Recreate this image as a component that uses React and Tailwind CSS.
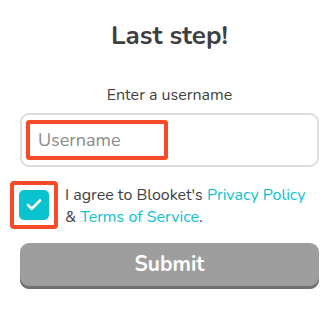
import { Check } from "lucide-react";

export default function App() {
  return (
    <div className="w-[335px] h-[314px] bg-white pl-[4px] font-['Nunito','Noto_Sans',sans-serif] text-[#3f3f3f] flex flex-col items-center">
      <h1 className="mt-[19px] text-[26px] leading-[34px] font-bold">Last step!</h1>

      <div className="mt-[31px] text-[16px] leading-[22px]">Enter a username</div>

      <div className="mt-[7px] w-[299px] h-[54px] border-2 border-[#dddddd] rounded-[9px] px-[4px] py-[3px] flex items-center">
        <input
          placeholder="Username"
          className="w-[142px] h-[40px] border-4 border-[#f54b28] rounded-[3px] px-[8px] text-[18px] outline-none placeholder:text-[#8a8a8a]"
        />
      </div>

      <div className="mt-[14px] w-[319px] flex items-start">
        <div className="shrink-0 border-4 border-[#f54b28] rounded-[4px] p-[5px]">
          <div className="w-[30px] h-[30px] rounded-[5px] bg-[#0bc2cf] flex items-center justify-center">
            <Check className="w-[18px] h-[18px] text-white" strokeWidth={3.5} />
          </div>
        </div>
        <p className="ml-[7px] mt-[3px] text-[16px] leading-[22px]">
          I agree to Blooket's <span className="text-[#0bc2cf]">Privacy Policy</span>
          <br />& <span className="text-[#0bc2cf]">Terms of Service</span>.
        </p>
      </div>

      <button className="mt-[14px] w-[299px] h-[46px] rounded-[9px] bg-[#9e9e9e] shadow-[inset_0_-3px_0_#707070] text-white text-[21px] font-bold pb-[3px]">
        Submit
      </button>
    </div>
  );
}
